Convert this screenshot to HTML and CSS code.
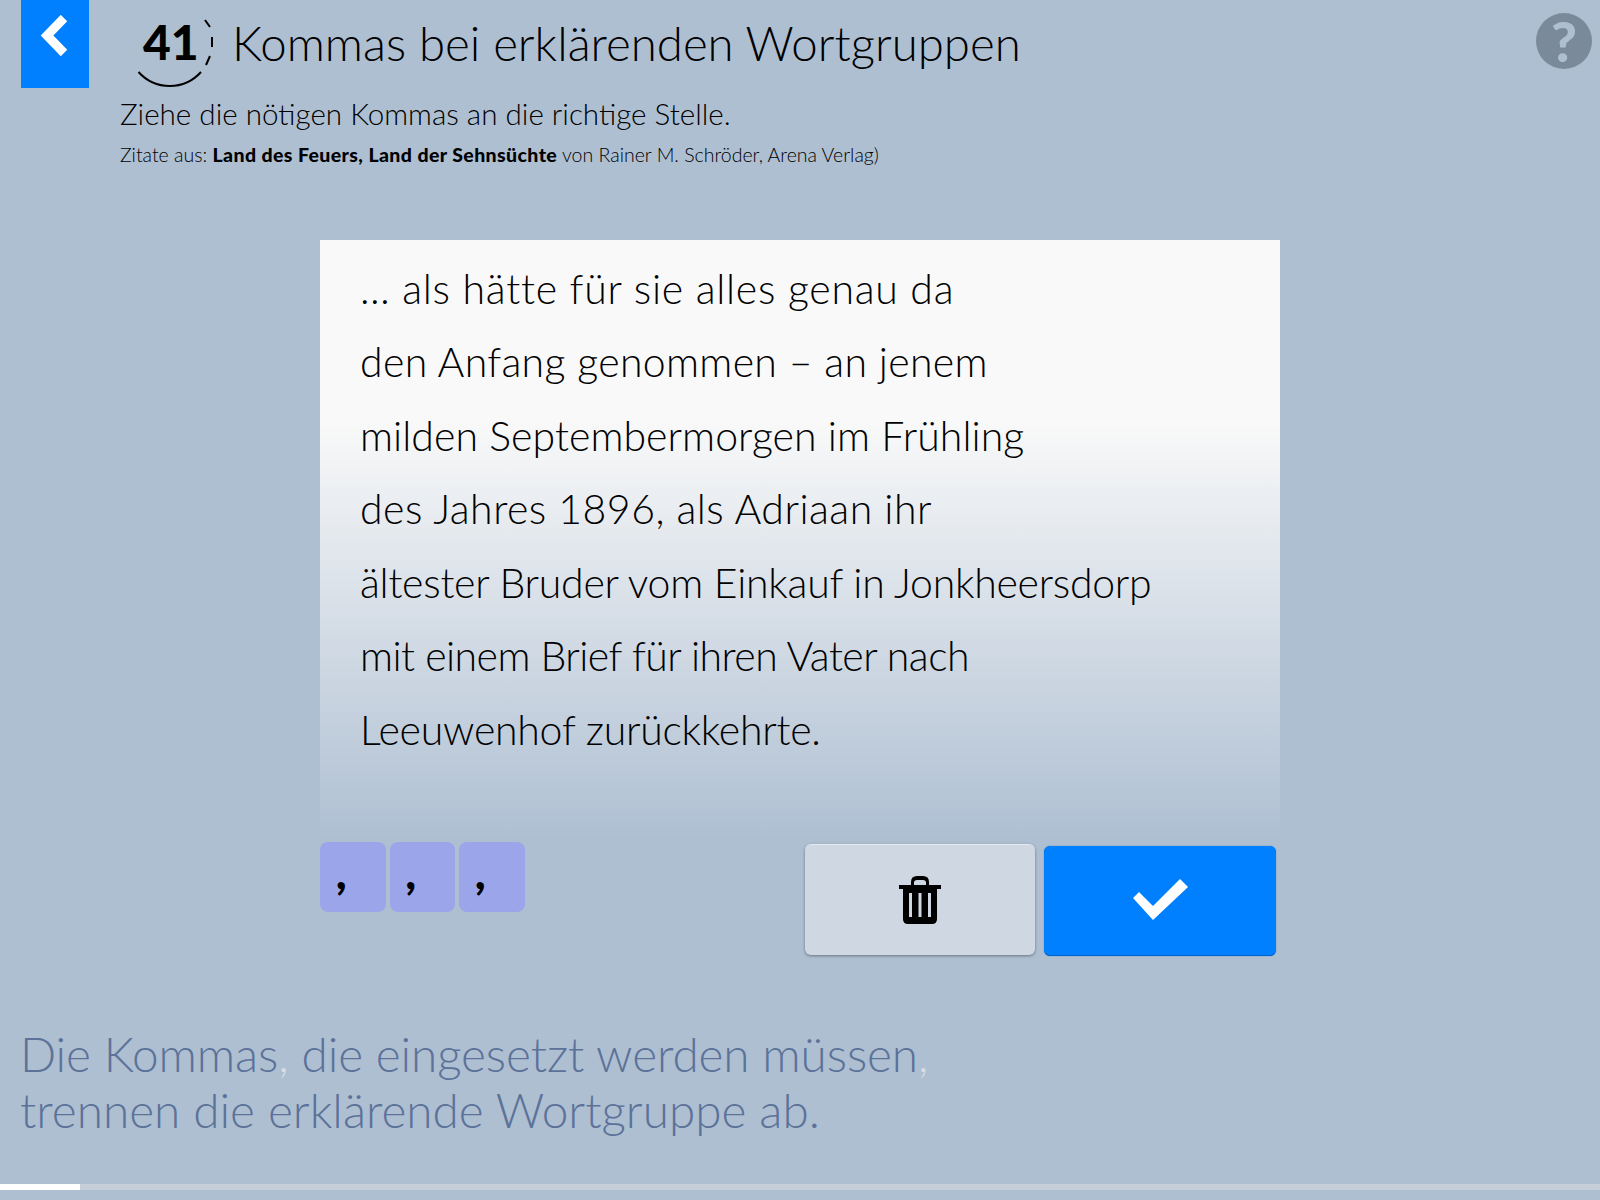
FILE: index.html
```html
<!DOCTYPE html>
<html lang="de">
<head>
<meta charset="utf-8">
<title>Kommas bei erklärenden Wortgruppen</title>
<link rel="stylesheet" href="styles.css">
</head>
<body>
<div class="page">
  <header class="header">
    <a class="back">
      <svg width="30" height="42" viewBox="0 0 30 42"><path d="M24 3 L7 20.5 L24 38" fill="none" stroke="#fff" stroke-width="9"/></svg>
    </a>
    <div class="badge">
      <svg class="badge-ring" width="84" height="72" viewBox="0 0 84 72"><path d="M68 3 L73 10 M75 20 L75 30 M73 39 L69 48 M1.500 55 A 42 42 0 0 0 64 55" fill="none" stroke="#000" stroke-width="2"/></svg>
      <span class="badge-num">41</span>
    </div>
    <h1 class="title">Kommas bei erklärenden Wortgruppen</h1>
    <div class="help">?</div>
  </header>
  <p class="task">Ziehe die nötigen Kommas an die richtige Stelle.</p>
  <p class="source">Zitate aus: <b>Land des Feuers, Land der Sehnsüchte</b> von Rainer M. Schröder, Arena Verlag)</p>

  <main class="exercise">
    <section class="card">
      <p>… als hätte für sie alles genau da</p>
      <p>den Anfang genommen – an jenem</p>
      <p>milden Septembermorgen im Frühling</p>
      <p>des Jahres 1896, als Adriaan ihr</p>
      <p>ältester Bruder vom Einkauf in Jonkheersdorp</p>
      <p>mit einem Brief für ihren Vater nach</p>
      <p>Leeuwenhof zurückkehrte.</p>
    </section>
    <div class="controls">
      <div class="tiles">
        <div class="tile">,</div>
        <div class="tile">,</div>
        <div class="tile">,</div>
      </div>
      <div class="buttons">
        <button class="btn btn-trash">
          <svg width="42" height="48" viewBox="0 0 42 48"><path fill-rule="evenodd" d="M0 9 H12 V6 Q12 0 18 0 H24 Q30 0 30 6 V9 H42 V13 H38 V43 Q38 48 33 48 H9 Q4 48 4 43 V13 H0 Z M15 9 H27 V6.5 Q27 4 24 4 H18 Q15 4 15 6.5 Z M10 17 V41 H13 V17 Z M19.500 17 V41 H22.500 V17 Z M29 17 V41 H32 V17 Z"/></svg>
        </button>
        <button class="btn btn-check">
          <svg width="58" height="44" viewBox="0 0 58 44"><path d="M2 19 L22 41 L57 8 L49 0 L22 27 L8 13 Z" fill="#fff"/></svg>
        </button>
      </div>
    </div>
  </main>

  <p class="hint"><span class="hint-first">Die Kommas<span class="hint-comma">,</span> die eingesetzt werden müssen<span class="hint-comma">,</span></span><br>trennen die erklärende Wortgruppe ab.</p>

  <div class="progress"><div class="progress-fill"></div></div>
</div>
</body>
</html>
```
FILE: styles.css
```css
* { box-sizing: border-box; }
html, body { margin: 0; padding: 0; }
body { background: #aebfd2; font-family: "Lato", "Open Sans", sans-serif; color: #000; font-weight: 300; }
.page { width: 1600px; height: 1200px; position: relative; overflow: hidden; }
.header { display: flex; align-items: flex-start; padding-left: 21px; height: 88px; }
.back { width: 68px; height: 88px; background: #0080ff; display: flex; justify-content: center; padding-top: 15px; align-items: flex-start; }
.badge { position: relative; width: 84px; height: 88px; margin-left: 49px; }
.badge-ring { position: absolute; left: -1px; top: 17px; }
.badge-num { position: absolute; left: 5px; top: 13px; font-size: 48px; line-height: 58px; font-weight: 900; }
.title { margin: 12px 0 0 10px; font-size: 47.400px; line-height: 62px; font-weight: 300; white-space: nowrap; flex: 1; }
.help { width: 56px; height: 56px; border-radius: 50%; background: #7a8a9b; color: #aebfd2; font-size: 56px; font-weight: 900; text-align: center; line-height: 56px; margin: 13px 8px 0 0; }
.task { margin: 9px 0 0 120px; font-size: 29.600px; line-height: 34px; }
.source { margin: 12px 0 0 120px; font-size: 19.500px; line-height: 24px; }
.source b { font-weight: 900; letter-spacing: .4px; }
.exercise { width: 960px; margin: 73px 0 0 320px; }
.card { height: 600px; padding: 11.500px 40px 0; background: linear-gradient(to bottom, #f9f9f9 0%, #f9f9f9 30%, #aebfd2 100%); }
.card p { margin: 0; font-size: 41px; line-height: 73.500px; white-space: nowrap; }
.card p:nth-child(1) { letter-spacing: .72px; }
.card p:nth-child(2) { letter-spacing: .33px; }
.card p:nth-child(3) { letter-spacing: .06px; }
.card p:nth-child(4) { letter-spacing: .48px; }
.card p:nth-child(5) { letter-spacing: -.26px; }
.card p:nth-child(6) { letter-spacing: -.54px; }
.card p:nth-child(7) { letter-spacing: -.25px; }
.controls { display: flex; justify-content: space-between; padding-right: 4px; margin-top: 2px; }
.tiles { display: flex; gap: 4px; }
.tile { width: 65.500px; height: 70px; border-radius: 8px; background: #9ba5ea; font-size: 46px; font-weight: 900; font-style: italic; line-height: 60px; padding-left: 17px; }
.buttons { display: flex; gap: 9px; align-items: flex-start; padding-top: 2px; }
.btn { border: 0; padding: 0; display: flex; align-items: center; justify-content: center; border-radius: 6px; }
.btn-trash { width: 230px; height: 111px; background: #cfd8e2; border-top: 1px solid #e6ebf0; box-shadow: 0 1px 3px rgba(0,0,0,.4); }
.btn-check { width: 232px; height: 110px; margin-top: 2px; background: #0080ff; border-bottom: 1px solid #0066cc; box-shadow: 0 0 1px #0060c0; }
.hint { margin: 70px 0 0 20px; font-size: 47.700px; line-height: 56px; color: #5c7299; }
.hint-first { letter-spacing: -.1px; }
.hint-comma { color: #d5dde6; }
.progress { position: absolute; left: 0; right: 0; bottom: 10px; height: 6px; background: #c5ced9; }
.progress-fill { width: 80px; height: 100%; background: #fff; }
```
